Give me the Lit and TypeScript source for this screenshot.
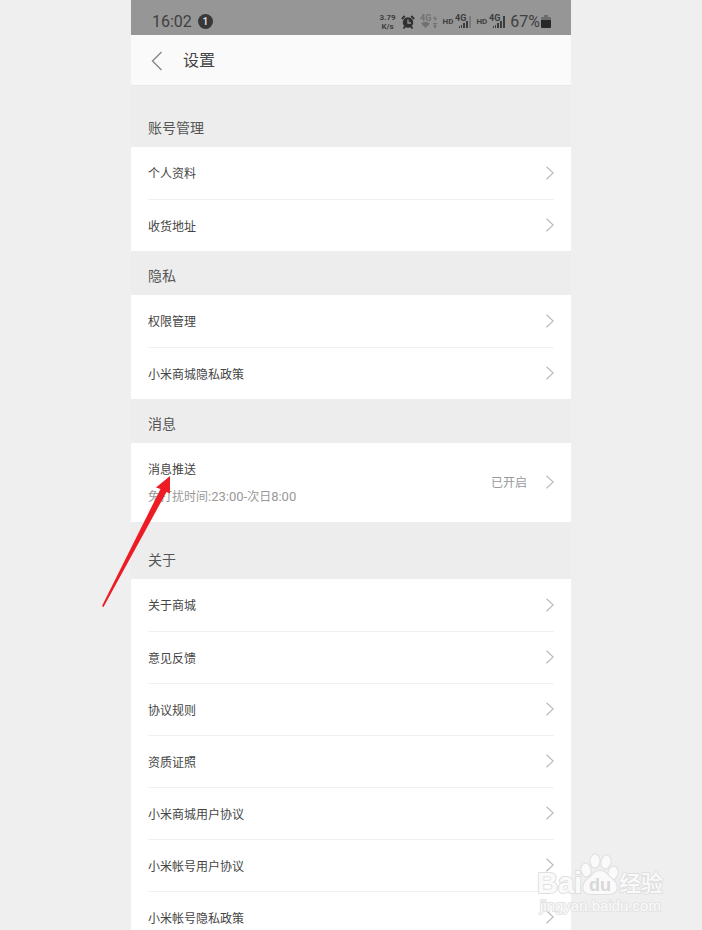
import { LitElement, html, svg, css } from "lit";
import { customElement, property } from "lit/decorators.js";

interface Item {
  label: string;
  note?: ReturnType<typeof html>;
  value?: string;
}

interface Group {
  title: string;
  tall?: "first" | "spaced";
  items: Item[];
}

const GROUPS: Group[] = [
  { title: "账号管理", tall: "first", items: [{ label: "个人资料" }, { label: "收货地址" }] },
  { title: "隐私", items: [{ label: "权限管理" }, { label: "小米商城隐私政策" }] },
  {
    title: "消息",
    items: [
      {
        label: "消息推送",
        note: html`免打扰时间<span class="num">:23:00-</span>次日<span class="num">8:00</span>`,
        value: "已开启",
      },
    ],
  },
  {
    title: "关于",
    tall: "spaced",
    items: [
      { label: "关于商城" },
      { label: "意见反馈" },
      { label: "协议规则" },
      { label: "资质证照" },
      { label: "小米商城用户协议" },
      { label: "小米帐号用户协议" },
      { label: "小米帐号隐私政策" },
    ],
  },
];

@customElement("status-bar")
export class StatusBar extends LitElement {
  static styles = css`
    :host {
      display: flex;
      align-items: center;
      justify-content: space-between;
      box-sizing: border-box;
      height: 35px;
      padding: 8px 20px 0 21px;
      background: #969696;
      color: #404040;
      font: 16px/20px Roboto, sans-serif;
    }
    .left,
    .right,
    .signal {
      display: flex;
      align-items: center;
    }
    .left {
      gap: 6px;
    }
    .count {
      width: 15px;
      height: 15px;
      border-radius: 50%;
      background: #383838;
      color: #d8d8d8;
      font: bold 10px/15px Roboto, sans-serif;
      text-align: center;
    }
    .right {
      gap: 5px;
    }
    .speed {
      display: grid;
      font-size: 8px;
      line-height: 9px;
      font-weight: bold;
      text-align: center;
    }
    .signal {
      gap: 2px;
      font-size: 8px;
      font-weight: bold;
    }
    .power {
      display: flex;
      align-items: center;
      gap: 1px;
    }
    svg {
      display: block;
      flex: none;
    }
    svg text {
      font: bold 9px Roboto, sans-serif;
    }
  `;

  private signal(faintLast: boolean) {
    return html`<span class="signal">
      <span>HD</span>
      <svg width="16" height="15" viewBox="0 0 16 15" fill="#3c3c3c">
        <text x="0" y="7">4G</text>
        <path d="M4 14v-2h1v2zM6 14v-3h1v3zM8 14V9h2v5zM11 14V7h2v7z" />
        <path d="M14 14V2h2v12z" opacity=${faintLast ? 0.3 : 1} />
      </svg>
    </span>`;
  }

  render() {
    return html`
      <div class="left"><span>16:02</span><span class="count">1</span></div>
      <div class="right">
        <span class="speed"><span>3.79</span><span>K/s</span></span>
        <svg width="14" height="14" viewBox="0 0 14 14">
          <circle cx="7" cy="7.5" r="5.2" fill="#303030" />
          <path d="M0.8 4l3-3M13.2 4l-3-3M2.5 13.5l1.5-2M11.5 13.5l-1.5-2" fill="none" stroke="#303030" stroke-width="1.8" />
          <path d="M7 4.5V8h3" fill="none" stroke="#969696" stroke-width="1.3" />
        </svg>
        <svg width="18" height="15" viewBox="0 0 18 15" fill="#717171">
          <text x="0" y="7">4G</text>
          <path d="M1 9.5q4.5-3.5 9 0L5.5 14z" />
          <path d="M15.5 1L13 5h2l-.5 3L17 4h-2zM13 9h4v1h-4zM15 10l2 2h-1v2h-2v-2h-1z" />
        </svg>
        ${this.signal(true)} ${this.signal(false)}
        <span class="power">
          <span>67%</span>
          <svg width="10" height="14" viewBox="0 0 10 14">
            <path d="M3 0h4v2h2q1 0 1 1v3H0V3q0-1 1-1h2z" fill="#6c6c6c" />
            <path d="M0 5h10v7q0 1-1 1H1q-1 0-1-1z" fill="#282828" />
          </svg>
        </span>
      </div>
    `;
  }
}

@customElement("settings-group")
export class SettingsGroup extends LitElement {
  @property({ attribute: false }) group!: Group;

  static styles = css`
    :host {
      display: block;
    }
    .title {
      display: flex;
      align-items: flex-end;
      box-sizing: border-box;
      height: 44px;
      margin: 0;
      padding: 0 17px 9px;
      background: #ededed;
      color: #555;
      font-size: 14px;
      line-height: 20px;
      font-weight: 400;
    }
    .title.first {
      height: 61px;
    }
    .title.spaced {
      height: 57px;
    }
    .list {
      margin: 0;
      padding: 0 17px;
      list-style: none;
      background: #fff;
    }
    .item + .item {
      border-top: 1px solid #f0f0f0;
    }
    .row {
      display: flex;
      align-items: center;
      box-sizing: border-box;
      min-height: 52px;
      color: #444;
      text-decoration: none;
    }
    .item + .item .row {
      min-height: 51px;
    }
    .row.detailed {
      min-height: 79px;
    }
    .text {
      flex: 1;
      display: grid;
      gap: 7px;
      padding-top: 2px;
    }
    .note,
    .value {
      color: #999;
    }
    .value {
      margin-right: 18px;
    }
    .num {
      font-size: 13px;
    }
    .chevron {
      display: block;
      flex: none;
      margin-bottom: 1px;
    }
  `;

  render() {
    const { title, tall, items } = this.group;
    return html`
      <h2 class="title ${tall ?? ""}">${title}</h2>
      <ul class="list">
        ${items.map(
          (item) => html`<li class="item">
            <a class="row ${item.note ? "detailed" : ""}" href="#">
              <span class="text">
                <span>${item.label}</span>
                ${item.note ? html`<span class="note">${item.note}</span>` : ""}
              </span>
              ${item.value ? html`<span class="value">${item.value}</span>` : ""}
              <svg class="chevron" width="9" height="14" viewBox="0 0 9 14" fill="none" stroke="#bbb" stroke-width="1.2">
                <path d="M1.5 .7L8.2 7l-6.7 6.3" />
              </svg>
            </a>
          </li>`
        )}
      </ul>
    `;
  }
}

@customElement("app-root")
export class AppRoot extends LitElement {
  static styles = css`
    :host {
      display: block;
      position: relative;
      height: 100vh;
      overflow: hidden;
      background: #efefef;
      font: 12px/20px Roboto, "Noto Sans CJK SC", sans-serif;
    }
    .phone {
      position: relative;
      max-width: 440px;
      margin: 0 auto;
    }
    .bar {
      display: flex;
      align-items: center;
      gap: 20px;
      box-sizing: border-box;
      height: 51px;
      padding: 2px 20px 0;
      background: #fafafa;
      border-bottom: 1px solid #e9e9e9;
    }
    .back {
      display: block;
      padding: 0;
      border: 0;
      background: none;
    }
    .back svg {
      display: block;
    }
    .heading {
      margin: 0;
      color: #444;
      font-size: 16px;
      line-height: 24px;
      font-weight: 400;
    }
    .arrow {
      position: absolute;
      left: -30px;
      top: 475px;
      pointer-events: none;
    }
    .watermark {
      position: absolute;
      right: 34px;
      bottom: 10px;
      pointer-events: none;
    }
    .mark {
      fill: #fafafa;
      stroke: #dfdfdf;
      stroke-width: 2px;
      stroke-linejoin: round;
      paint-order: stroke;
    }
    .latin {
      font: bold 29px "Liberation Sans", sans-serif;
    }
    .han {
      font: 500 22px "Noto Sans CJK SC", sans-serif;
    }
    .site {
      font: 15px "Liberation Sans", sans-serif;
      stroke: #e4e4e4;
    }
    .du {
      font: bold 18px "Liberation Sans", sans-serif;
      fill: #d8d8d8;
    }
  `;

  private watermark() {
    return svg`
      <text class="mark latin" x="1" y="41">Bai</text>
      <g class="mark">
        <ellipse cx="50" cy="18" rx="4.5" ry="6.5" transform="rotate(-12 50 18)" />
        <ellipse cx="59" cy="9" rx="4.5" ry="6.5" />
        <ellipse cx="70" cy="10" rx="4.5" ry="6.5" transform="rotate(12 70 10)" />
        <ellipse cx="77" cy="21" rx="4.5" ry="6.5" transform="rotate(12 77 21)" />
        <path d="M64 19C58 19 56 24 51 28C45 33 46 42 55 42H73C82 42 83 33 77 28C72 24 70 19 64 19Z" />
      </g>
      <text class="du" x="53" y="39">du</text>
      <text class="mark han" x="83" y="39">经验</text>
      <text class="mark site" x="4" y="59">jingyan.baidu.com</text>`;
  }

  render() {
    return html`
      <main class="phone">
        <status-bar></status-bar>
        <header class="bar">
          <button class="back" type="button" aria-label="返回">
            <svg width="12" height="20" viewBox="0 0 12 20" fill="none" stroke="#888" stroke-width="1.4">
              <path d="M10.5 1L1.5 10l9 9" />
            </svg>
          </button>
          <h1 class="heading">设置</h1>
        </header>
        ${GROUPS.map((g) => html`<settings-group .group=${g}></settings-group>`)}
        <svg class="arrow" width="72" height="134" viewBox="0 0 72 134" fill="#ed1c24">
          <path d="M69 1L55 12.5l4.5 1.5L1 131l1.5 1L65.500 17l3.500 1.500z" />
        </svg>
      </main>
      <svg class="watermark" width="132" height="68" viewBox="0 0 132 68">${this.watermark()}</svg>
    `;
  }
}
